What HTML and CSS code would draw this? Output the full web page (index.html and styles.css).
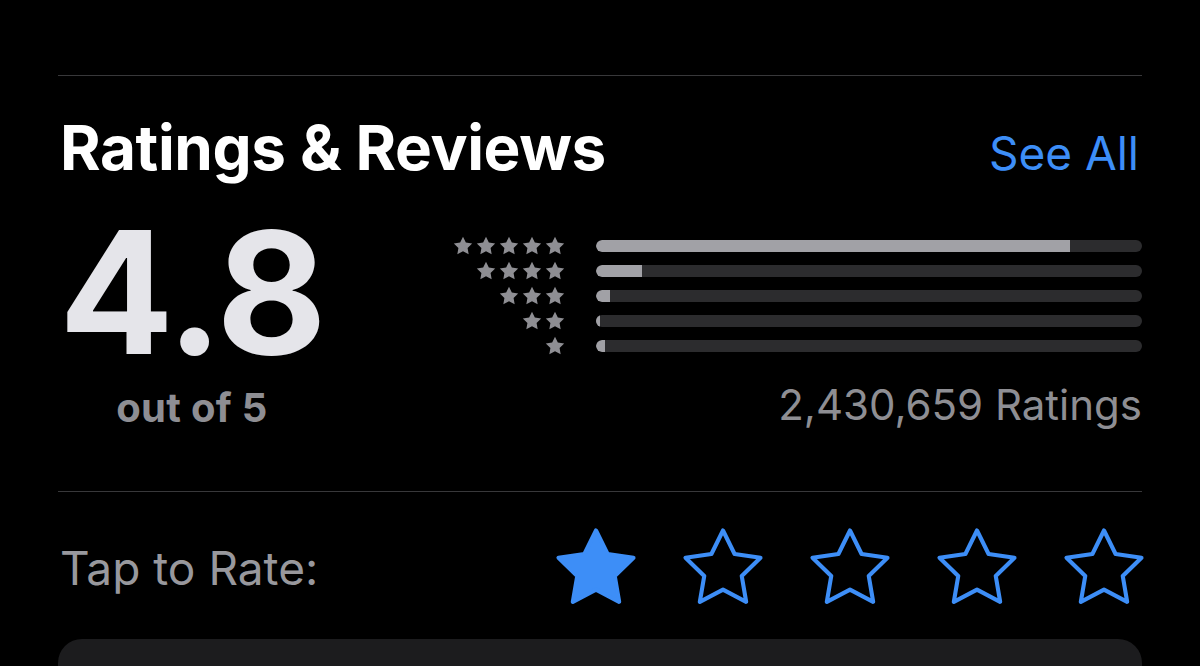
FILE: index.html
```html
<!DOCTYPE html>
<html lang="en">
<head>
  <meta charset="UTF-8">
  <title>Ratings &amp; Reviews</title>
  <link rel="stylesheet" href="styles.css">
</head>
<body>

  <div class="page">
    <hr class="divider top">

    <div class="header">
      <h1>Ratings &amp; Reviews</h1>
      <a href="#" class="see-all">See All</a>
    </div>

    <div class="summary">
      <div class="score">
        <div class="big">4.8</div>
        <div class="out-of">out of 5</div>
      </div>

      <div class="breakdown">
        <div class="rows">
          <div class="row">
            <div class="stars">
              <svg viewBox="0 0 24 24"><path d="M12 2l3.09 6.26L22 9.27l-5 4.87 1.18 6.88L12 17.77l-6.18 3.25L7 14.14 2 9.27l6.91-1.01z"/></svg>
              <svg viewBox="0 0 24 24"><path d="M12 2l3.09 6.26L22 9.27l-5 4.87 1.18 6.88L12 17.77l-6.18 3.25L7 14.14 2 9.27l6.91-1.01z"/></svg>
              <svg viewBox="0 0 24 24"><path d="M12 2l3.09 6.26L22 9.27l-5 4.87 1.18 6.88L12 17.77l-6.18 3.25L7 14.14 2 9.27l6.91-1.01z"/></svg>
              <svg viewBox="0 0 24 24"><path d="M12 2l3.09 6.26L22 9.27l-5 4.87 1.18 6.88L12 17.77l-6.18 3.25L7 14.14 2 9.27l6.91-1.01z"/></svg>
              <svg viewBox="0 0 24 24"><path d="M12 2l3.09 6.26L22 9.27l-5 4.87 1.18 6.88L12 17.77l-6.18 3.25L7 14.14 2 9.27l6.91-1.01z"/></svg>
            </div>
            <div class="bar"><div class="fill" style="width: 86.8%"></div></div>
          </div>
          <div class="row">
            <div class="stars">
              <svg viewBox="0 0 24 24"><path d="M12 2l3.09 6.26L22 9.27l-5 4.87 1.18 6.88L12 17.77l-6.18 3.25L7 14.14 2 9.27l6.91-1.01z"/></svg>
              <svg viewBox="0 0 24 24"><path d="M12 2l3.09 6.26L22 9.27l-5 4.87 1.18 6.88L12 17.77l-6.18 3.25L7 14.14 2 9.27l6.91-1.01z"/></svg>
              <svg viewBox="0 0 24 24"><path d="M12 2l3.09 6.26L22 9.27l-5 4.87 1.18 6.88L12 17.77l-6.18 3.25L7 14.14 2 9.27l6.91-1.01z"/></svg>
              <svg viewBox="0 0 24 24"><path d="M12 2l3.09 6.26L22 9.27l-5 4.87 1.18 6.88L12 17.77l-6.18 3.25L7 14.14 2 9.27l6.91-1.01z"/></svg>
            </div>
            <div class="bar"><div class="fill" style="width: 8.5%"></div></div>
          </div>
          <div class="row">
            <div class="stars">
              <svg viewBox="0 0 24 24"><path d="M12 2l3.09 6.26L22 9.27l-5 4.87 1.18 6.88L12 17.77l-6.18 3.25L7 14.14 2 9.27l6.91-1.01z"/></svg>
              <svg viewBox="0 0 24 24"><path d="M12 2l3.09 6.26L22 9.27l-5 4.87 1.18 6.88L12 17.77l-6.18 3.25L7 14.14 2 9.27l6.91-1.01z"/></svg>
              <svg viewBox="0 0 24 24"><path d="M12 2l3.09 6.26L22 9.27l-5 4.87 1.18 6.88L12 17.77l-6.18 3.25L7 14.14 2 9.27l6.91-1.01z"/></svg>
            </div>
            <div class="bar"><div class="fill" style="width: 2.6%"></div></div>
          </div>
          <div class="row">
            <div class="stars">
              <svg viewBox="0 0 24 24"><path d="M12 2l3.09 6.26L22 9.27l-5 4.87 1.18 6.88L12 17.77l-6.18 3.25L7 14.14 2 9.27l6.91-1.01z"/></svg>
              <svg viewBox="0 0 24 24"><path d="M12 2l3.09 6.26L22 9.27l-5 4.87 1.18 6.88L12 17.77l-6.18 3.25L7 14.14 2 9.27l6.91-1.01z"/></svg>
            </div>
            <div class="bar"><div class="fill" style="width: 0.8%"></div></div>
          </div>
          <div class="row">
            <div class="stars">
              <svg viewBox="0 0 24 24"><path d="M12 2l3.09 6.26L22 9.27l-5 4.87 1.18 6.88L12 17.77l-6.18 3.25L7 14.14 2 9.27l6.91-1.01z"/></svg>
            </div>
            <div class="bar"><div class="fill" style="width: 1.6%"></div></div>
          </div>
        </div>
        <div class="count">2,430,659 Ratings</div>
      </div>
    </div>

    <hr class="divider mid">

    <div class="rate">
      <span class="rate-label">Tap to Rate:</span>
      <div class="rate-stars">
        <svg viewBox="0 0 24 24" class="on"><path d="M12 2l3.09 6.26L22 9.27l-5 4.87 1.18 6.88L12 17.77l-6.18 3.25L7 14.14 2 9.27l6.91-1.01z"/></svg>
        <svg viewBox="0 0 24 24"><path d="M12 2l3.09 6.26L22 9.27l-5 4.87 1.18 6.88L12 17.77l-6.18 3.25L7 14.14 2 9.27l6.91-1.01z"/></svg>
        <svg viewBox="0 0 24 24"><path d="M12 2l3.09 6.26L22 9.27l-5 4.87 1.18 6.88L12 17.77l-6.18 3.25L7 14.14 2 9.27l6.91-1.01z"/></svg>
        <svg viewBox="0 0 24 24"><path d="M12 2l3.09 6.26L22 9.27l-5 4.87 1.18 6.88L12 17.77l-6.18 3.25L7 14.14 2 9.27l6.91-1.01z"/></svg>
        <svg viewBox="0 0 24 24"><path d="M12 2l3.09 6.26L22 9.27l-5 4.87 1.18 6.88L12 17.77l-6.18 3.25L7 14.14 2 9.27l6.91-1.01z"/></svg>
      </div>
    </div>

    <div class="review-card"></div>
  </div>

</body>
</html>
```

FILE: styles.css
```css
html, body {
  margin: 0;
  background: #000;
}
body {
  font-family: Inter, "Noto Sans", sans-serif;
  color: #fff;
  overflow: hidden;
}
.page {
  padding: 75px 58px 0;
}
.divider {
  border: 0;
  height: 1px;
  background: #38383a;
  margin: 0;
}
.header {
  display: flex;
  justify-content: space-between;
  align-items: baseline;
  margin-top: 36px;
}
h1 {
  margin: 0 0 0 2px;
  font-size: 62px;
  font-weight: 700;
  letter-spacing: -0.4px;
  line-height: 72px;
}
.see-all {
  color: #3d8ef7;
  text-decoration: none;
  font-size: 46px;
  font-weight: 400;
  margin-right: 3px;
}
.summary {
  display: flex;
  align-items: flex-start;
  margin-top: 24px;
}
.score {
  width: 268px;
  text-align: center;
}
.big {
  font-size: 170px;
  font-weight: 700;
  color: #e5e5ea;
  line-height: 168px;
  letter-spacing: -2px;
}
.out-of {
  font-size: 40px;
  font-weight: 700;
  color: #8e8e93;
  line-height: 48px;
  margin-top: 8px;
  letter-spacing: 0.3px;
}
.breakdown {
  flex: 1;
  padding-top: 31px;
}
.rows {
  display: flex;
  flex-direction: column;
  gap: 12px;
}
.row {
  display: flex;
  align-items: center;
  height: 13px;
}
.stars {
  width: 270px;
  display: flex;
  justify-content: flex-end;
  gap: 1px;
  padding-right: 30px;
  box-sizing: border-box;
}
.stars svg {
  width: 22px;
  height: 22px;
  fill: #8e8e93;
}
.bar {
  flex: 1;
  height: 12px;
  border-radius: 6px;
  background: #2c2c2e;
  overflow: hidden;
}
.fill {
  height: 100%;
  background: #a1a1a6;
  border-radius: 6px 0 0 6px;
  min-width: 3px;
}
.count {
  text-align: right;
  font-size: 42px;
  color: #8e8e93;
  margin-top: 29px;
  line-height: 48px;
}
.divider.mid {
  margin-top: 59px;
}
.rate {
  display: flex;
  justify-content: space-between;
  align-items: center;
  margin-top: 31px;
}
.rate-label {
  font-size: 46px;
  color: #98989d;
  margin-left: 2px;
}
.rate-stars {
  display: flex;
  gap: 37px;
  margin-right: -7px;
}
.rate-stars svg {
  width: 90px;
  height: 90px;
  fill: none;
  stroke: #3d8ef7;
  stroke-width: 1.1;
  stroke-linejoin: round;
}
.rate-stars svg.on {
  fill: #3d8ef7;
}
.review-card {
  margin-top: 26px;
  height: 120px;
  background: #1c1c1e;
  border-radius: 24px;
}
```
